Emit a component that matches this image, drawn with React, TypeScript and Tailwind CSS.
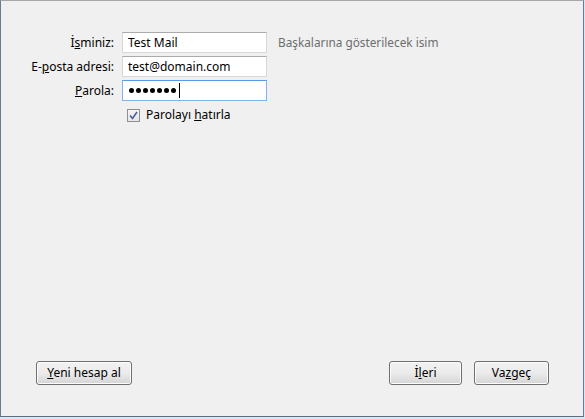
export default function App() {
  const font = { fontFamily: '"Segoe UI", "Noto Sans", "Open Sans", sans-serif' };
  const btn =
    "h-[24px] rounded-[3px] border border-[#707070] bg-gradient-to-b from-[#f2f2f2] via-[#ebebeb] to-[#d5d5d5] text-[12px] text-black flex items-center justify-center shadow-[inset_0_0_0_1px_#fcfcfc]";
  const dots = [0, 1, 2, 3, 4, 5, 6];
  return (
    <div className="w-[585px] h-[419px] bg-[#dbe6f3] overflow-hidden" style={font}>
      <div className="w-[584px] h-[417px] border-l border-r border-b border-t border-l-[#6b7d93] border-r-[#6b7d93] border-b-[#5b6d84] border-t-[#a7a7a7] bg-[#f0f0f0] flex flex-col text-[12px] text-black">
        <div className="pt-[31px] flex flex-col gap-[3px]">
          <div className="flex items-center h-[21px]">
            <div className="w-[113px] text-right pr-0">
              İ<span className="underline">s</span>miniz:
            </div>
            <input
              readOnly
              value="Test Mail"
              className="ml-[8px] w-[145px] h-[21px] border border-[#d7d7d7] border-t-[#ababab] bg-white px-[5px] text-[12px] outline-none"
              style={font}
            />
            <div className="ml-[11px] text-[#6d6d6d] text-[11.8px]">Başkalarına gösterilecek isim</div>
          </div>
          <div className="flex items-center h-[21px]">
            <div className="w-[113px] text-right">
              E-<span className="underline">p</span>osta adresi:
            </div>
            <input
              readOnly
              value="test@domain.com"
              className="ml-[8px] w-[145px] h-[21px] border border-[#d7d7d7] border-t-[#ababab] bg-white px-[5px] text-[12px] outline-none"
              style={font}
            />
          </div>
          <div className="flex items-center h-[21px]">
            <div className="w-[113px] text-right">
              <span className="underline">P</span>arola:
            </div>
            <div className="ml-[8px] w-[145px] h-[21px] border border-[#7eb4ea] border-t-[#569de5] bg-white pl-[6px] flex items-center gap-[2px]">
              {dots.map((d) => (
                <span key={d} className="w-[5px] h-[5px] rounded-full bg-black" />
              ))}
              <span className="ml-[1px] w-px h-[15px] bg-black" />
            </div>
          </div>
          <div className="flex items-center h-[20px] mt-[1px]">
            <div className="ml-[126px] w-[13px] h-[13px] border border-[#8e8f8f] bg-gradient-to-b from-[#f4f4f4] to-[#e6e6e6] flex items-center justify-center">
              <svg width="9" height="9" viewBox="0 0 9 9">
                <path d="M1 4.5 L3.5 7.5 L8 1" fill="none" stroke="#4a5f97" strokeWidth="1.6" />
              </svg>
            </div>
            <div className="ml-[6px]">
              Parolayı <span className="underline">h</span>atırla
            </div>
          </div>
        </div>
        <div className="flex-1" />
        <div className="flex items-center pb-[31px] pl-[35px] pr-[34px]">
          <div className={btn + " w-[96px]"}>
            <span>
              <span className="underline">Y</span>eni hesap al
            </span>
          </div>
          <div className="flex-1" />
          <div className={btn + " w-[73px]"}>
            <span>
              İ<span className="underline">l</span>eri
            </span>
          </div>
          <div className={btn + " w-[75px] ml-[12px]"}>
            <span>
              Va<span className="underline">z</span>geç
            </span>
          </div>
        </div>
      </div>
    </div>
  );
}
